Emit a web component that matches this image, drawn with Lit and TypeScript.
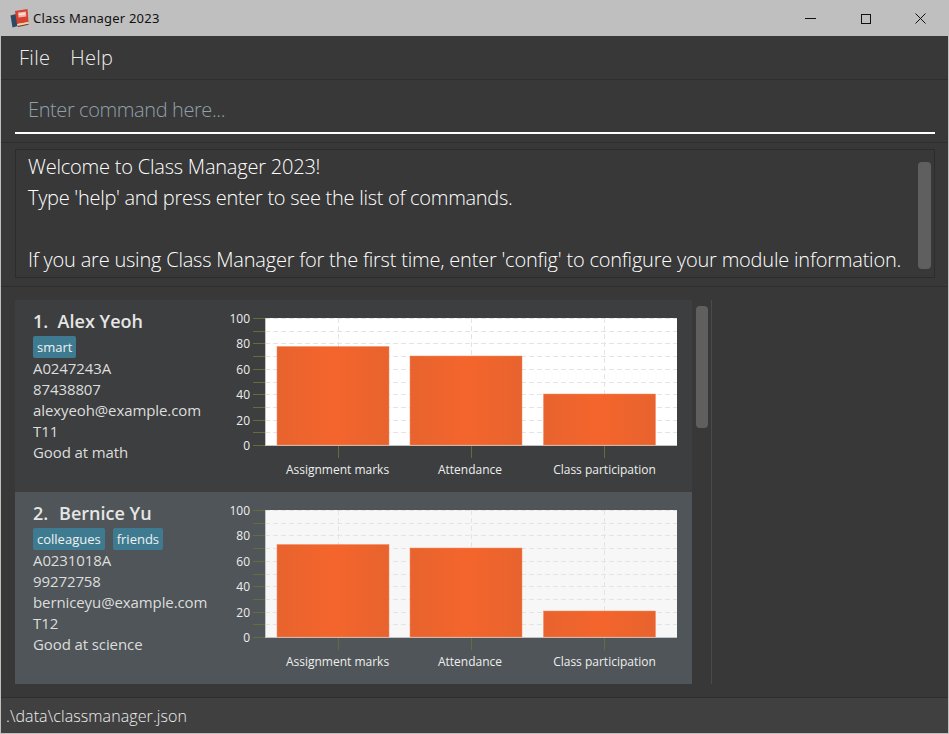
import { LitElement, html, css, svg } from "lit";
import { customElement } from "lit/decorators.js";

interface Person {
  idx: number; name: string; tags: string[]; sid: string; phone: string;
  email: string; cls: string; note: string; tops: number[]; selected: boolean;
}

const PEOPLE: Person[] = [
  { idx: 1, name: "Alex Yeoh", tags: ["smart"], sid: "A0247243A", phone: "87438807", email: "alexyeoh@example.com", cls: "T11", note: "Good at math", tops: [28.5, 38, 76], selected: false },
  { idx: 2, name: "Bernice Yu", tags: ["colleagues", "friends"], sid: "A0231018A", phone: "99272758", email: "berniceyu@example.com", cls: "T12", note: "Good at science", tops: [34.5, 38, 101], selected: true },
];

const CATS = ["Assignment marks", "Attendance", "Class participation"];
const BAR_X = [12, 145, 278.5];
const CENTRES = [73, 206, 339];
const LABEL_X = [72.5, 205, 339.5];

function chart(p: Person) {
  const ox = 44, oy = 10, w = 412, h = 127;
  const grid = Array.from({ length: 11 }, (_, i) => i);
  return html`<svg class="chart" width="470" height="176" viewBox="0 0 470 176">
    <defs>
      <linearGradient id="g${p.idx}" x1="0" x2="1" y1="0" y2="0">
        <stop offset="0" stop-color="#e8632e" />
        <stop offset="0.5" stop-color="#f4652c" />
        <stop offset="1" stop-color="#e8632e" />
      </linearGradient>
    </defs>
    <rect x=${ox} y=${oy} width=${w} height=${h} fill=${p.selected ? "#f7f7f7" : "#ffffff"} />
    ${grid.map((i) => {
      const y = Math.round(oy + (i * h) / 10) + 0.5;
      return svg`<line x1=${ox} x2=${ox + w} y1=${y} y2=${y} stroke="#e4e4e4" stroke-dasharray="5 3" />`;
    })}
    ${CENTRES.map((c) => svg`<line x1=${ox + c + 0.5} x2=${ox + c + 0.5} y1=${oy} y2=${oy + h} stroke="#e4e4e4" stroke-dasharray="5 3" />`)}
    <line x1=${ox + 0.5} x2=${ox + 0.5} y1=${oy} y2=${oy + h + 1} stroke="#c4c4c4" />
    <line x1=${ox} x2=${ox + w} y1=${oy + h + 0.5} y2=${oy + h + 0.5} stroke="#c4c4c4" />
    ${p.tops.map((t, i) => svg`<rect x=${ox + BAR_X[i]} y=${oy + t} width="112" height=${h - t} fill="url(#g${p.idx})" stroke="#f58a5e" stroke-width="0.5" />`)}
    ${grid.map((i) => {
      const y = Math.round(oy + (i * h) / 10) + 0.5;
      return svg`<line x1=${ox - 12} x2=${ox} y1=${y} y2=${y} stroke="#646c3c" />`;
    })}
    ${CENTRES.map((c) => svg`<line x1=${ox + c + 0.5} x2=${ox + c + 0.5} y1=${oy + h + 1} y2=${oy + h + 13} stroke="#646c3c" />`)}
    ${[100, 80, 60, 40, 20, 0].map((v, i) => svg`<text class="ylab" x=${ox - 15} y=${oy + (i * h) / 5 + 5} text-anchor="end">${v}</text>`)}
    ${CATS.map((c, i) => svg`<text class="xlab" x=${ox + LABEL_X[i]} y=${oy + h + 29} text-anchor="middle">${c}</text>`)}
  </svg>`;
}

@customElement("app-root")
export class AppRoot extends LitElement {
  static styles = css`
    :host {
      display: block;
      width: 949px;
      height: 734px;
      background: #bfbfbf;
      font-family: "Open Sans", "Noto Sans", sans-serif;
      overflow: hidden;
    }
    .window { display: flex; flex-direction: column; height: 734px; padding: 0 1px 1px 1px; box-sizing: border-box; }
    .titlebar { display: flex; align-items: center; height: 36px; flex: none; color: #111; font-family: "Noto Sans", sans-serif; font-size: 13px; letter-spacing: 0.2px; padding-left: 9px; gap: 4px; }
    .title { flex: 1; }
    .winbtns { display: flex; }
    .winbtn { width: 55px; height: 36px; display: flex; align-items: center; justify-content: center; }
    .body { flex: 1; display: flex; flex-direction: column; background: #383838; min-height: 0; color: #fff; }
    .menubar { height: 43px; flex: none; display: flex; align-items: center; gap: 20px; padding-left: 18px; border-bottom: 1px solid #2e2e2e; font-size: 20px; font-weight: 300; letter-spacing: 0.3px; color: #eee; }
    .cmd { flex: none; padding: 0 13px 8px 14px; display: flex; border-bottom: 1px solid #2e2e2e; }
    .cmd-inner { flex: 1; border-bottom: 2px solid #fff; display: flex; align-items: center; padding: 6px 0 0 13px; font-size: 20px; font-weight: 300; color: #8fa0ab; box-sizing: border-box; height: 54px; letter-spacing: -0.4px; }
    .result-wrap { flex: none; padding: 6px 13px 8px 14px; border-bottom: 1px solid #2e2e2e; }
    .result { position: relative; height: 129px; box-sizing: border-box; border: 1px solid #2c2c2c; padding: 1px 12px; font-size: 20px; line-height: 31px; font-weight: 300; color: #fff; white-space: nowrap; letter-spacing: -0.21px; }
    .result .tight { letter-spacing: -0.28px; }
    .result .blank { height: 31px; }
    .result .bar { position: absolute; right: 3px; top: 12px; width: 13px; height: 107px; background: #5f5f5f; border-radius: 4px; }
    .list-wrap { flex: 1; display: flex; min-height: 0; padding: 13px 0 13px 14px; border-bottom: 1px solid #2e2e2e; }
    .list { width: 677px; flex: none; display: flex; flex-direction: column; }
    .card { height: 192px; flex: none; display: flex; background: #3c3e3f; box-sizing: border-box; padding: 8px 0 0 18px; }
    .card.sel { background: #4f5558; }
    .info { width: 200px; flex: none; color: #ddd; font-size: 15px; line-height: 21px; letter-spacing: -0.1px; }
    .name { font-size: 18px; font-weight: 600; line-height: 26px; margin-bottom: 2px; letter-spacing: 0; color: #e6e6e6; white-space: pre; }
    .sel .num { margin-right: 1.5px; }
    .tags { display: flex; gap: 8px; height: 22px; align-items: center; letter-spacing: 0; }
    .tag { background: #3e7b91; border-radius: 2px; color: #f0f0f0; font-size: 13px; line-height: 22px; padding: 0 4px; }
    .chart { display: block; margin-left: -12px; flex: none; }
    .ylab, .xlab { font-size: 12px; fill: #eee; font-family: "Open Sans", "Noto Sans", sans-serif; }
    .scroller { width: 14px; margin-left: 3px; flex: none; position: relative; }
    .thumb { position: absolute; left: 1px; top: 6px; width: 12px; height: 122px; background: #5f5f5f; border-radius: 4px; }
    .divider { width: 1px; background: #4a4a4a; margin-left: 2px; flex: none; }
    .status { height: 35px; flex: none; display: flex; align-items: center; padding-left: 5px; background: #404040; font-size: 16px; font-weight: 300; letter-spacing: 0.1px; color: #eee; }
  `;

  render() {
    return html`<div class="window">
      <div class="titlebar">
        <svg width="19" height="20" viewBox="0 0 19 20">
          <path d="M0.5 7.5 L6 6 L8 18 L2.5 19.5 Z" fill="#2c4a66" />
          <path d="M5 3 L17.5 1 L18.5 14 L7 16 Z" fill="#d8402f" />
          <path d="M8 4.5 L16 3.5 L16.3 8.5 L8.5 9.5 Z" fill="#f0b8ad" />
          <path d="M9 6 L15 5.2 L15 6.2 L9 7 Z" fill="#ffffff" />
          <path d="M7 16 L18.5 14 L18.5 15.8 L7.5 18 Z" fill="#e9d9a8" />
          <path d="M7.5 18 L18.5 15.8 L18.5 16.8 L8 19 Z" fill="#8a2f28" />
        </svg>
        <span class="title">Class Manager 2023</span>
        <div class="winbtns">
          <div class="winbtn"><svg width="11" height="11"><line x1="0" x2="11" y1="5.5" y2="5.5" stroke="#111" /></svg></div>
          <div class="winbtn"><svg width="11" height="11"><rect x="1.5" y="1.5" width="9" height="9" fill="none" stroke="#111" /></svg></div>
          <div class="winbtn"><svg width="11" height="11"><path d="M.5.5l10 10M10.5.5l-10 10" stroke="#111" fill="none" /></svg></div>
        </div>
      </div>
      <div class="body">
        <div class="menubar"><span>File</span><span>Help</span></div>
        <div class="cmd"><div class="cmd-inner">Enter command here...</div></div>
        <div class="result-wrap">
          <div class="result">
            <div>Welcome to Class Manager 2023!</div>
            <div class="tight">Type 'help' and press enter to see the list of commands.</div>
            <div class="blank"></div>
            <div>If you are using Class Manager for the first time, enter 'config' to configure your module information.</div>
            <div class="bar"></div>
          </div>
        </div>
        <div class="list-wrap">
          <div class="list">
            ${PEOPLE.map((p) => html`<div class="card ${p.selected ? "sel" : ""}">
              <div class="info">
                <div class="name"><span class="num">${p.idx}.</span>  ${p.name}</div>
                <div class="tags">${p.tags.map((t) => html`<span class="tag">${t}</span>`)}</div>
                <div>${p.sid}</div><div>${p.phone}</div><div>${p.email}</div><div>${p.cls}</div><div>${p.note}</div>
              </div>
              ${chart(p)}
            </div>`)}
          </div>
          <div class="scroller"><div class="thumb"></div></div>
          <div class="divider"></div>
        </div>
        <div class="status">.\\data\\classmanager.json</div>
      </div>
    </div>`;
  }
}
